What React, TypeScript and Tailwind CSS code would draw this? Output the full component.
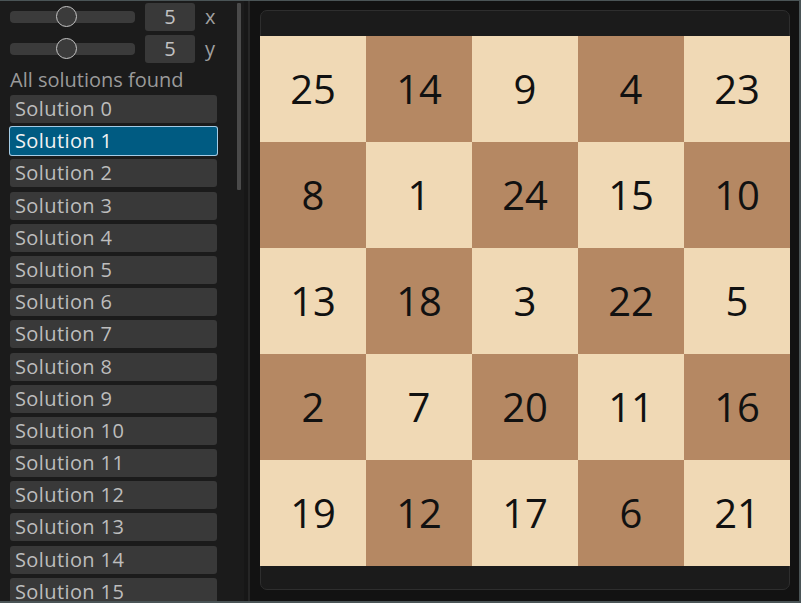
import * as React from "react"

const board: number[][] = [
  [25, 14, 9, 4, 23],
  [8, 1, 24, 15, 10],
  [13, 18, 3, 22, 5],
  [2, 7, 20, 11, 16],
  [19, 12, 17, 6, 21],
]

const solutions = Array.from({ length: 16 }, (_, i) => `Solution ${i}`)

function SliderRow({ label, value }: { label: string; value: number }) {
  return (
    <div className="flex h-[28px] items-center">
      <div className="relative h-[12px] w-[125px] rounded-[4px] bg-[#3b3b3b]">
        {/* handle */}
        <div className="absolute left-[46px] top-[-5px] h-[21px] w-[21px] rounded-full border-[1.5px] border-[#c4c4c4] bg-[#3b3b3b]" />
      </div>
      <div className="ml-[10px] flex h-[28px] w-[50px] items-center justify-center rounded-[3px] bg-[#393939] text-[20px] text-[#c2c2c2]">
        {value}
      </div>
      <span className="ml-[10px] text-[20px] leading-none text-[#a0a0a0]">{label}</span>
    </div>
  )
}

export default function App() {
  const [selected, setSelected] = React.useState(1)

  return (
    <div
      className="flex h-[603px] w-[801px] overflow-hidden border-t border-r-2 border-b-2 border-[#4a5456] bg-[#1b1b1b]"
      style={{ fontFamily: '"Open Sans", "Noto Sans", sans-serif' }}
    >
      {/* left panel */}
      <div className="flex w-[236px] shrink-0 flex-col overflow-hidden pl-[10px] pt-[2px]">
        <div className="flex flex-col gap-[4px]">
          <SliderRow label="x" value={5} />
          <SliderRow label="y" value={5} />
        </div>
        <div className="flex h-[37px] items-center pt-[2px] text-[20px] text-[#9a9a9a]">All solutions found</div>
        <ul className="flex flex-col gap-[4.2px]">
          {solutions.map((name, i) => (
            <li key={name} className="leading-none">
              <button
                onClick={() => setSelected(i)}
                className={
                  i === selected
                    ? "flex h-[28px] w-[207px] shrink-0 items-center rounded-[2px] bg-[#005b82] pl-[5px] text-[20px] tracking-[0.4px] text-[#f2f2f2] ring-1 ring-[#a4cce6]"
                    : "flex h-[28px] w-[207px] shrink-0 items-center rounded-[3px] bg-[#393939] pl-[5px] text-[20px] tracking-[0.4px] text-[#bdbdbd]"
                }
              >
                {name}
              </button>
            </li>
          ))}
        </ul>
      </div>

      {/* scrollbar */}
      <div className="w-[8px] shrink-0 pt-[2px]">
        <div className="ml-[1px] h-[187px] w-[4px] rounded-[1px] bg-[#4a4a4a]" />
      </div>
      <div className="w-[4px] shrink-0 bg-[#171717]" />
      <div className="w-[2px] shrink-0 bg-[#262626]" />

      {/* board area */}
      <div className="flex flex-1 bg-[#121212] pl-[10px] pr-[9px] pt-[9px] pb-[11px]">
        <div className="flex flex-1 flex-col rounded-[7px] border border-[#2e2e2e] bg-[#1b1b1b] pt-[25px]">
          <div className="ml-[-1px] mr-[-1px] grid grid-cols-5">
            {board.map((row, r) =>
              row.map((n, c) => (
                <div
                  key={`${r}-${c}`}
                  className={
                    (r + c) % 2 === 0
                      ? "flex h-[106px] items-center justify-center bg-[#f0d9b5] text-[40px] text-[#111111]"
                      : "flex h-[106px] items-center justify-center bg-[#b58863] text-[40px] text-[#111111]"
                  }
                >
                  {n}
                </div>
              ))
            )}
          </div>
        </div>
      </div>
    </div>
  )
}
